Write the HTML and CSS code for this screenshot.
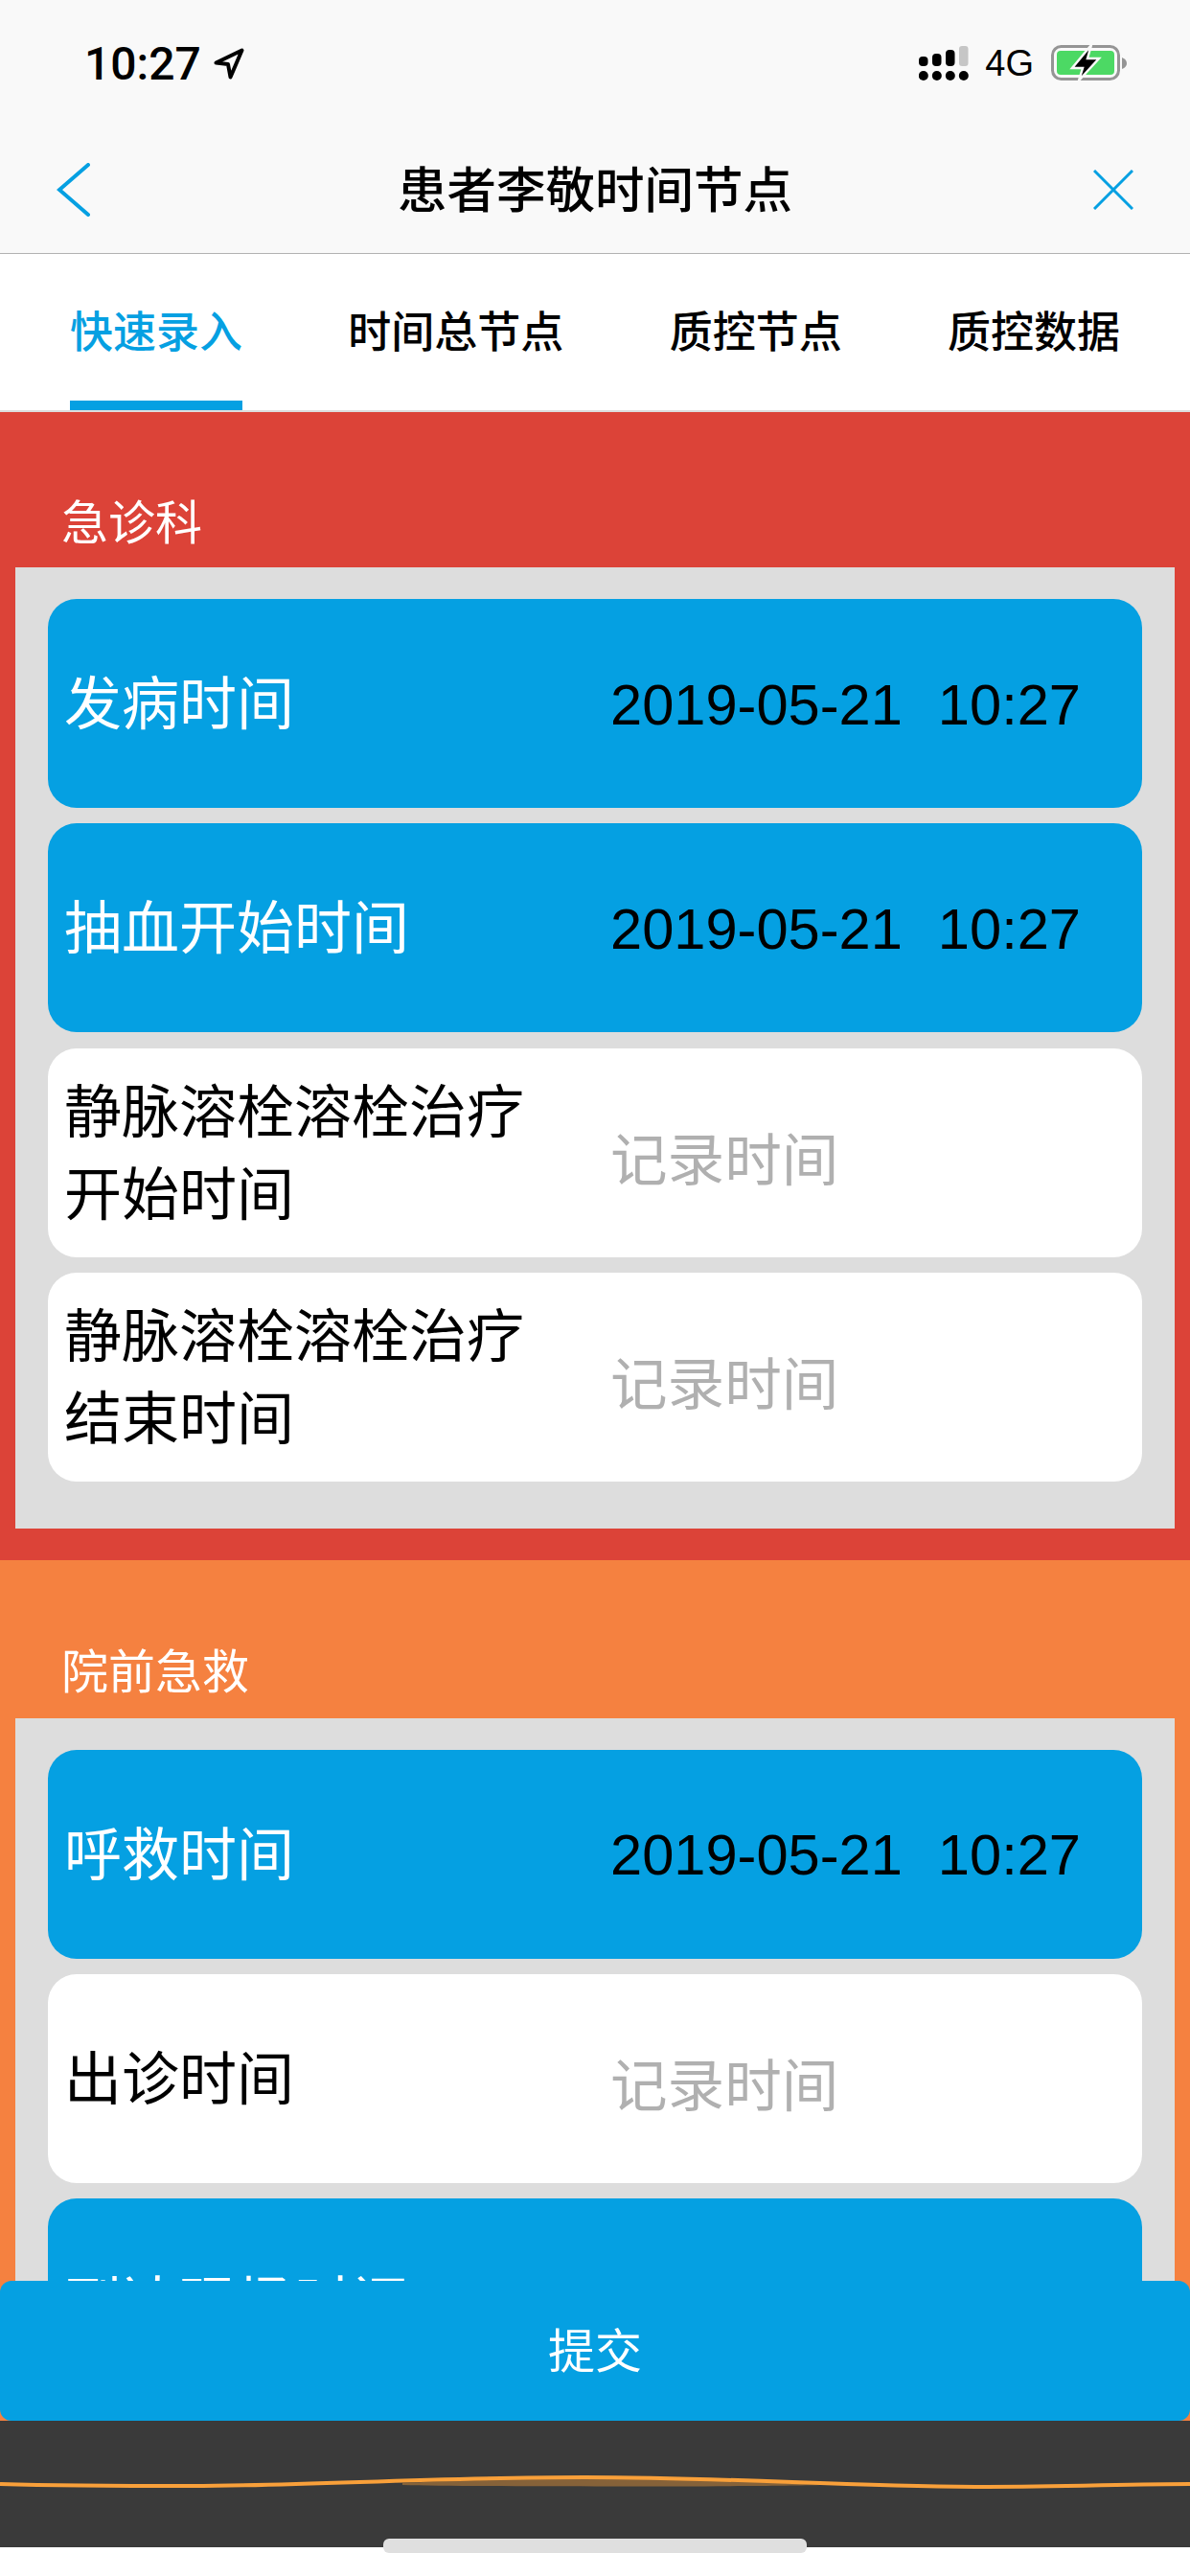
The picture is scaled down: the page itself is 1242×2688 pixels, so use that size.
FILE: index.html
```html
<!DOCTYPE html>
<html lang="zh-CN">
  <head>
    <meta charset="UTF-8" />
    <title>患者李敬时间节点</title>
    <link rel="stylesheet" href="styles.css">
  </head>
  <body>
    <div class="screen">
      <div class="topbar">
        <div class="statusbar">
          <div class="status-left">
            <span class="clock">10:27</span>
            <svg class="locate" viewBox="0 0 32 33" width="32" height="33"><path d="M2.500 15.500 L29.500 2.500 L17.500 30.500 L15 17 Z" fill="none" stroke="#000" stroke-width="4" stroke-linejoin="round"/></svg>
          </div>
          <div class="status-right">
            <svg class="signal" viewBox="0 0 52 36" width="52" height="36">
              <rect x="0" y="11" width="9.500" height="10" rx="4" fill="#000"/>
              <rect x="14" y="8" width="9.500" height="13" rx="4" fill="#000"/>
              <rect x="28" y="4" width="9.500" height="17" rx="4" fill="#000"/>
              <rect x="42" y="0" width="9.500" height="21" rx="3" fill="#c6c6c6"/>
              <circle cx="4.800" cy="31" r="5" fill="#000"/>
              <circle cx="18.800" cy="31" r="5" fill="#000"/>
              <circle cx="32.800" cy="31" r="5" fill="#000"/>
              <circle cx="46.800" cy="31" r="5" fill="#000"/>
            </svg>
            <span class="network">4G</span>
            <svg class="battery" viewBox="0 0 80 38" width="80" height="38">
              <rect x="1.500" y="1.500" width="69" height="34" rx="9" fill="none" stroke="#959595" stroke-width="3"/>
              <rect x="6" y="6" width="60" height="25" rx="4" fill="#4cd964"/>
              <path d="M74 13 q5 2 5 6 q0 4 -5 6 Z" fill="#959595"/>
              <path d="M42 0 L22 24 H33 L29 37 L50 14 H38 Z" fill="#000" stroke="#f9f9f9" stroke-width="2.500"/>
            </svg>
          </div>
        </div>
        <div class="navbar">
          <svg class="nav-back" viewBox="0 0 36 56" width="36" height="56"><path d="M33 2 L3 28 L33 54" fill="none" stroke="#05a0e2" stroke-width="4" stroke-linecap="round"/></svg>
          <h1>患者李敬时间节点</h1>
          <svg class="nav-close" viewBox="0 0 42 42" width="42" height="42"><path d="M1 1 L41 41 M41 1 L1 41" fill="none" stroke="#05a0e2" stroke-width="3"/></svg>
        </div>
      </div>

      <div class="tabs">
        <a class="tab active">快速录入</a>
        <a class="tab">时间总节点</a>
        <a class="tab">质控节点</a>
        <a class="tab">质控数据</a>
      </div>

      <div class="content">
        <section class="group red">
          <h2>急诊科</h2>
          <div class="panel">
            <div class="row done"><span class="name">发病时间</span><span class="value"><span>2019-05-21</span><span>10:27</span></span></div>
            <div class="row done"><span class="name">抽血开始时间</span><span class="value"><span>2019-05-21</span><span>10:27</span></span></div>
            <div class="row"><span class="name">静脉溶栓溶栓治疗开始时间</span><span class="value">记录时间</span></div>
            <div class="row"><span class="name">静脉溶栓溶栓治疗结束时间</span><span class="value">记录时间</span></div>
          </div>
        </section>
        <section class="group orange">
          <h2>院前急救</h2>
          <div class="panel">
            <div class="row done"><span class="name">呼救时间</span><span class="value"><span>2019-05-21</span><span>10:27</span></span></div>
            <div class="row"><span class="name">出诊时间</span><span class="value">记录时间</span></div>
            <div class="row done"><span class="name">到达现场时间</span><span class="value"><span>2019-05-21</span><span>10:27</span></span></div>
          </div>
        </section>
        <button class="submit">提交</button>
      </div>

      <div class="player">
        <svg class="wave" viewBox="0 0 1242 40">
          <path d="M420 19 C480 16 540 13 610 13 C700 13 780 17 860 21 C780 23 500 23 420 21 Z" fill="#f9a03a" opacity="0.4"/>
          <path d="M0 20 C70 22 130 22 200 22 C320 22 450 13 610 13 C770 13 880 23 1030 23 C1110 23 1180 20 1242 20" fill="none" stroke="#f9a03a" stroke-width="4"/>
        </svg>
      </div>
      <div class="home-bar"></div>
      <div class="home-indicator"></div>
    </div>
  </body>
</html>
```

FILE: styles.css
```css
* {
  box-sizing: border-box;
}

body {
  margin: 0;
  background-color: white;
  font-family: "Liberation Sans", "Noto Sans CJK SC", sans-serif;
}

.screen {
  position: relative;
  display: flex;
  flex-direction: column;
  width: 1242px;
  height: 2688px;
  overflow: hidden;
}

.topbar {
  height: 265px;
  background-color: #f9f9f9;
  border-bottom: 1px solid #b2b2b2;
}

.statusbar {
  display: flex;
  align-items: center;
  justify-content: space-between;
  height: 132px;
  padding: 0 65px 0 88px;
}

.status-left,
.status-right {
  display: flex;
  align-items: center;
}

.clock {
  font-family: Roboto, sans-serif;
  font-size: 48px;
  font-weight: 500;
}

.locate {
  margin-left: 13px;
}

.network {
  margin: 0 18px 0 17px;
  font-size: 38px;
}

.navbar {
  display: grid;
  grid-template-columns: 1fr auto 1fr;
  align-items: center;
  height: 132px;
  padding: 0 59px;
}

.navbar h1 {
  margin: 0;
  padding-bottom: 8px;
  font-size: 51.5px;
  font-weight: 500;
}

.nav-close {
  justify-self: end;
}

.tabs {
  display: flex;
  align-items: flex-start;
  justify-content: space-between;
  height: 165px;
  padding: 0 73px;
  background-color: white;
  border-bottom: 2px solid #dddddd;
}

.tab {
  height: 163px;
  padding-top: 56px;
  font-size: 45px;
  font-weight: 500;
  line-height: 54px;
  color: black;
}

.tab.active {
  border-bottom: 10px solid #05a0e2;
  color: #05a0e2;
}

.content {
  position: relative;
  flex: 1;
  overflow: hidden;
}

.group h2 {
  margin: 0;
  height: 162px;
  padding: 85px 0 0 64px;
  font-size: 49px;
  font-weight: 400;
  line-height: 62px;
  color: white;
}

.red {
  padding-bottom: 33px;
  background-color: #dc4338;
}

.orange {
  background-color: #f58140;
}

.orange h2 {
  height: 165px;
  padding-top: 86px;
}

.panel {
  display: flex;
  flex-direction: column;
  gap: 16.3px;
  margin: 0 16px;
  padding: 33px 34px 49px;
  background-color: #dddddd;
}

.row {
  display: flex;
  align-items: center;
  height: 218px;
  padding: 0 17px;
  border-radius: 30px;
  background-color: white;
}

.row.done {
  background-color: #05a0e2;
}

.name {
  width: 570px;
  padding: 4px 60px 0 0;
  font-size: 60px;
  line-height: 86px;
  color: black;
}

.done .name {
  color: white;
}

.value {
  display: flex;
  gap: 37px;
  padding-top: 6px;
  font-size: 59.6px;
  color: #b0b0b0;
}

.done .value {
  padding-top: 2px;
  color: black;
}

.submit {
  position: absolute;
  left: 0;
  bottom: 132px;
  width: 100%;
  height: 146px;
  padding-bottom: 8px;
  border: none;
  border-radius: 12px;
  background-color: #05a0e2;
  font-family: inherit;
  font-size: 49px;
  color: white;
}

.player {
  display: flex;
  align-items: center;
  position: absolute;
  left: 0;
  bottom: 30px;
  width: 100%;
  height: 132px;
  background-color: #3a3a3a;
}

.wave {
  width: 100%;
  height: 40px;
}

.home-bar {
  height: 30px;
  flex-shrink: 0;
  background-color: white;
}

.home-indicator {
  position: absolute;
  left: 400px;
  top: 2649px;
  width: 442px;
  height: 15px;
  border-radius: 6px;
  background-color: #dfdfdf;
}
```
